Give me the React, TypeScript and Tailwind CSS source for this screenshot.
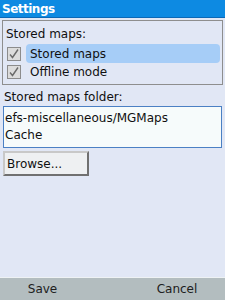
import React from "react";

function Check() {
  return (
    <div className="flex h-[14px] w-[14px] shrink-0 items-center justify-center border border-[#8c8c8c] bg-[#dcdcdc]">
      <svg width="12" height="12" viewBox="0 0 12 12">
        <path d="M2 6.5 L4.5 9.5 L10 1.5" fill="none" stroke="#6a6a6a" strokeWidth="1.4" />
      </svg>
    </div>
  );
}

export default function App() {
  return (
    <div
      className="flex h-[300px] w-[225px] flex-col bg-[#e1e7f5] text-[12px] text-[#101010]"
      style={{ fontFamily: '"DejaVu Sans", sans-serif' }}
    >
      <div className="flex h-[18px] items-center border-b border-[#0b68b6] bg-[#0d8ae2] px-[2px] text-[12px] font-bold tracking-[-0.5px] text-white">
        Settings
      </div>

      <div className="flex flex-1 flex-col px-[2px] pt-[2px]">
        <div className="flex flex-col border border-[#8e8e8e] px-[2px] pb-[3px] pt-[3px]">
          <div className="h-[20px] pl-[1px] leading-[20px]">Stored maps:</div>
          <div className="flex h-[19px] items-center gap-[5px] pl-[2px]">
            <Check />
            <div className="flex h-[19px] flex-1 items-center rounded-[4px] bg-[#a6cdf7] pl-[4px]">
              Stored maps
            </div>
          </div>
          <div className="flex h-[18px] items-center gap-[5px] pl-[2px]">
            <Check />
            <div className="pl-[4px]">Offline mode</div>
          </div>
        </div>

        <div className="mt-[3px] h-[18px] pl-[2px] leading-[18px]">Stored maps folder:</div>

        <div className="mx-[1px] flex h-[42px] flex-col justify-center border border-[#4b80c4] bg-[#f6fbfb] pl-[1px] leading-[17px]">
          <div>efs-miscellaneous/MGMaps</div>
          <div>Cache</div>
        </div>

        <div className="mx-[1px] mt-[3px] flex h-[25px] w-[86px] items-center border-2 border-t-[#c8c8c8] border-l-[#c8c8c8] border-r-[#707070] border-b-[#707070] bg-[#eef0f2] pl-[2px]">
          Browse...
        </div>
      </div>

      <div className="flex h-[23px] items-center justify-between border-t border-[#eef2f4] bg-[#b3bdbf] text-[12px] text-[#202020]">
        <div className="w-[85px] text-center">Save</div>
        <div className="mr-[10px] w-[76px] text-center">Cancel</div>
      </div>
    </div>
  );
}
